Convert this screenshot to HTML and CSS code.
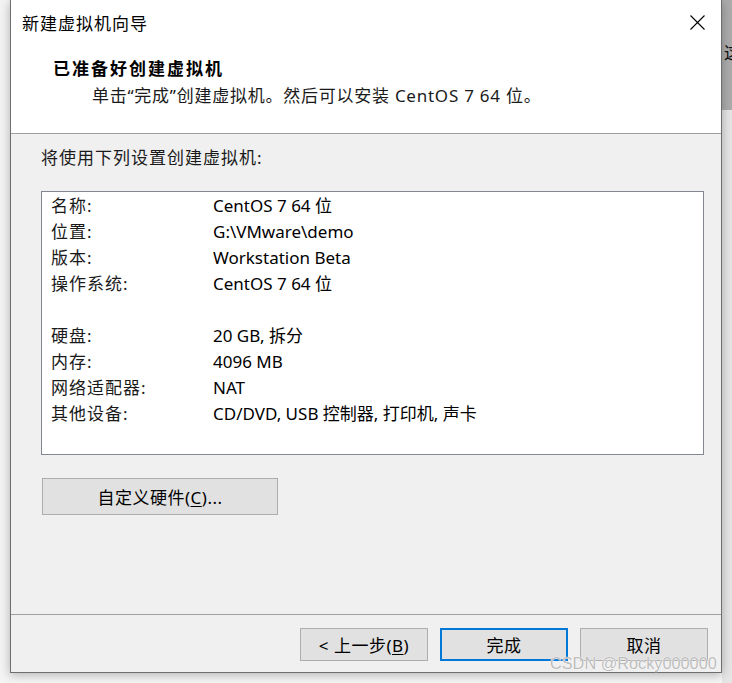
FILE: index.html
```html
<!DOCTYPE html>
<html lang="zh-CN">
<head>
<meta charset="utf-8">
<title>新建虚拟机向导</title>
<link rel="stylesheet" href="styles.css">
</head>
<body>
<div class="desktop">
  <div class="side-left"></div>
  <div class="window">
    <div class="header">
      <div class="titlebar">
        <span class="title">新建虚拟机向导</span>
        <svg class="close" width="15" height="15" viewBox="0 0 15 15"><path d="M0.5 0.5 L14.5 14.5 M14.5 0.5 L0.5 14.5" stroke="#000" stroke-width="1.1" fill="none"/></svg>
      </div>
      <div class="heading">已准备好创建虚拟机</div>
      <div class="subtitle">单击“完成”创建虚拟机。然后可以安装 CentOS 7 64 位。</div>
    </div>
    <div class="content">
      <div class="intro">将使用下列设置创建虚拟机:</div>
      <div class="summary">
        <div class="row"><span class="label">名称:</span><span class="value">CentOS 7 64 位</span></div>
        <div class="row"><span class="label">位置:</span><span class="value">G:\VMware\demo</span></div>
        <div class="row"><span class="label">版本:</span><span class="value">Workstation Beta</span></div>
        <div class="row"><span class="label">操作系统:</span><span class="value">CentOS 7 64 位</span></div>
        <div class="row blank"></div>
        <div class="row"><span class="label">硬盘:</span><span class="value">20 GB, 拆分</span></div>
        <div class="row"><span class="label">内存:</span><span class="value">4096 MB</span></div>
        <div class="row"><span class="label">网络适配器:</span><span class="value">NAT</span></div>
        <div class="row"><span class="label">其他设备:</span><span class="value">CD/DVD, USB 控制器, 打印机, 声卡</span></div>
      </div>
      <button class="btn btn-custom">自定义硬件(<u>C</u>)...</button>
    </div>
    <div class="footer">
      <button class="btn">&lt; 上一步(<u>B</u>)</button>
      <button class="btn btn-default">完成</button>
      <button class="btn">取消</button>
    </div>
  </div>
  <div class="side-right"><div class="behind">这</div></div>
</div>
<div class="watermark">CSDN @Rocky000000</div>
</body>
</html>
```
FILE: styles.css
```css
html, body {
  margin: 0;
  padding: 0;
  background: #f6f6f6;
}
body {
  width: 732px;
  height: 683px;
  overflow: hidden;
  position: relative;
  font-family: "Noto Sans", "Noto Sans CJK SC", sans-serif;
  color: #000;
}
.desktop {
  display: flex;
  align-items: flex-start;
}
.side-left {
  width: 10px;
  height: 683px;
  background: #f4f4f4;
}
.window {
  width: 712px;
  height: 673px;
  box-sizing: border-box;
  border: 1px solid #6e6e6e;
  border-top: none;
  background: #f0f0f0;
  display: flex;
  flex-direction: column;
  box-shadow: 0 2px 10px rgba(0, 0, 0, 0.28);
  position: relative;
  z-index: 1;
}
.side-right {
  width: 10px;
  height: 683px;
  background: #e6e6e6;
  overflow: hidden;
}
.behind {
  height: 110px;
  background: #acacac;
  font-family: "Noto Sans CJK SC", sans-serif;
  font-size: 17px;
  line-height: 20px;
  padding-top: 42px;
  padding-left: 2px;
  box-sizing: border-box;
  color: #111;
}
.header {
  height: 134px;
  box-sizing: border-box;
  background: #fff;
  border-bottom: 1px solid #a0a0a0;
}
.titlebar {
  height: 44px;
  display: flex;
  align-items: center;
  justify-content: space-between;
  padding: 0 16px 0 11px;
}
.title {
  font-family: "Noto Sans CJK SC", sans-serif;
  font-size: 17px;
  letter-spacing: 1px;
}
.close {
  display: block;
}
.heading {
  margin-left: 42px;
  margin-top: 12px;
  line-height: 24px;
  font-family: "Noto Sans CJK SC", sans-serif;
  font-size: 17px;
  font-weight: 700;
  letter-spacing: 2px;
}
.subtitle {
  margin-left: 81px;
  margin-top: 4px;
  line-height: 24px;
  font-size: 17px;
  letter-spacing: 0.75px;
  color: #1a1a1a;
}
.content {
  flex: 1;
  padding: 12px 17px 0 30px;
  border-bottom: 1px solid #a0a0a0;
}
.intro {
  line-height: 24px;
  font-size: 17px;
  letter-spacing: 1px;
  color: #1a1a1a;
}
.summary {
  margin-top: 21px;
  height: 264px;
  box-sizing: border-box;
  background: #fff;
  border: 1px solid #828790;
  padding: 1px 0 0 9px;
}
.row {
  display: grid;
  grid-template-columns: 162px 1fr;
  height: 26px;
  line-height: 26px;
  font-size: 17px;
}
.label {
  letter-spacing: 1px;
  color: #1a1a1a;
}
.value {
  color: #000;
}
.btn {
  font-family: "Noto Sans", "Noto Sans CJK SC", sans-serif;
  font-size: 17px;
  color: #000;
  background: #e1e1e1;
  border: 1px solid #adadad;
  width: 128px;
  height: 33px;
  padding: 0;
  box-sizing: border-box;
  letter-spacing: 0.5px;
}
.btn u {
  text-underline-offset: 2px;
}
.btn-custom {
  margin: 23px 0 0 1px;
  width: 236px;
  height: 37px;
  display: block;
}
.btn-default {
  border: 2px solid #0078d7;
}
.footer {
  height: 57px;
  display: flex;
  justify-content: flex-end;
  align-items: flex-start;
  gap: 12px;
  padding: 13px 13px 0 0;
  box-sizing: border-box;
}
.watermark {
  position: absolute;
  left: 550px;
  top: 653px;
  z-index: 2;
  font-family: "Liberation Sans", sans-serif;
  font-size: 16.3px;
  line-height: 20px;
  color: #bcbcbc;
  text-shadow: 0 0 1px #fff, 0 0 1px #fff;
}
```
